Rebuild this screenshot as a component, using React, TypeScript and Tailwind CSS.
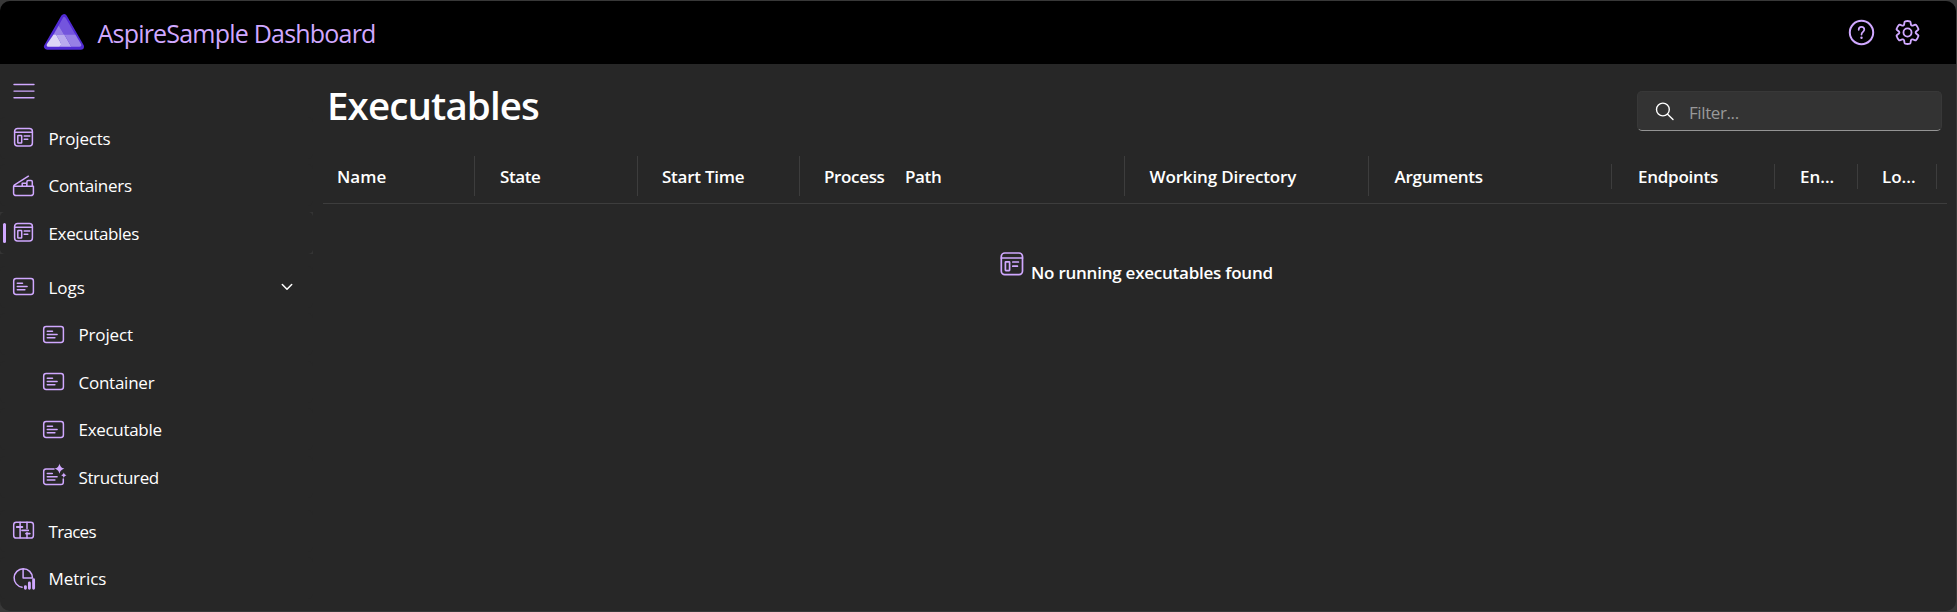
import type { ReactNode } from "react";

const ACCENT = "#d0a8ff";

function Icon({ w = 25, h = 25, sw = 1.5, className = "", children }: { w?: number; h?: number; sw?: number; className?: string; children: ReactNode }) {
  return (
    <svg
      width={w}
      height={h}
      viewBox={`0 0 ${w} ${h}`}
      fill="none"
      stroke={ACCENT}
      strokeWidth={sw}
      strokeLinecap="round"
      strokeLinejoin="round"
      className={`shrink-0 overflow-visible ${className}`}
    >
      {children}
    </svg>
  );
}

const AppIcon = () => (
  <Icon>
    <rect x="3.6" y="3.5" width="17.8" height="17.6" rx="3" />
    <path d="M3.6 7.2h17.8M13.2 10.9h5.6M13.2 14.2h3.6" />
    <rect x="6.8" y="10.6" width="3.9" height="7.3" rx=".5" />
  </Icon>
);

const BoxIcon = () => (
  <Icon>
    <path d="M2.6 13.2h19.8v7a2.4 2.4 0 0 1-2.4 2.4H5a2.4 2.4 0 0 1-2.4-2.4zM2.6 13.2l1-1.4L17.4 3.2M11.2 12.8v-2.6h4.6v2.6M15.9 12.8V8.8a1.2 1.2 0 0 1 1.2-1.2h3a1.2 1.2 0 0 1 1.2 1.2v4" />
  </Icon>
);

const SlideIcon = () => (
  <Icon>
    <rect x="2.7" y="4.6" width="19.7" height="15.9" rx="2.4" />
    <path d="M6.3 9.2h5.2M6.3 12.5h9.8M6.3 15.8h7.6" />
  </Icon>
);

const SparkleSlideIcon = () => (
  <Icon>
    <path d="M13 4.9H5a2.3 2.3 0 0 0-2.3 2.3v11a2.3 2.3 0 0 0 2.3 2.3h15a2.3 2.3 0 0 0 2.3-2.3V15M6.3 9.5h5M6.3 12.8h9.8M6.3 16.1h7.6" />
    <g fill={ACCENT} stroke="none">
      <path d="M18.5-.4c.9 3.3 1.8 4.2 4.9 5.2-3.1 1-4 1.9-4.9 5-.9-3.1-1.8-4-4.9-5 3.1-1 4-1.9 4.9-5.2z" />
      <path d="M22.8 8.5c.5 1.7 1 2.2 2.7 2.7-1.7.5-2.2 1-2.7 2.7-.5-1.7-1-2.2-2.7-2.7 1.7-.5 2.2-1 2.7-2.7z" />
    </g>
  </Icon>
);

const TraceIcon = () => (
  <Icon>
    <rect x="2.7" y="4.2" width="19.7" height="15.9" rx="2.6" />
    <path d="M9.1 4.2v4.6M9.1 10.6v9.2M16 4.2v6.2M16 14.8v5.1" />
    <path d="M5.8 9h5.6M11 12.3h6.2M15 15.6h3.8" strokeWidth="1.8" />
  </Icon>
);

const MetricIcon = () => (
  <Icon>
    <path d="M12.1 2.7a9.3 9.3 0 0 0-1 18.5M12.1 2.7a9.3 9.3 0 0 1 9.4 9.3h-9.4z" />
    <path d="M14.4 20.6v1.6M18.4 17v5.2M22.6 13.8v8.4" strokeWidth="2.9" />
  </Icon>
);

function Logo() {
  return (
    <svg width="42" height="38" viewBox="43 12 42 38" className="mb-px shrink-0">
      <path d="M64 16.4 47.2 45.5h33.6z" fill="#512bd4" stroke="#512bd4" strokeWidth="6.4" strokeLinejoin="round" />
      <path d="M64 16c.8 0 1.3.5 1.8 1.3l9.6 16.3H64l-5.3-9 4-7.3c.4-.8.7-1.3 1.3-1.3z" fill="#7455dd" />
      <path d="M58.7 24.6 64 33.6H53.5z" fill="#9780e5" />
      <path d="M53.5 33.6H56l4.7 8.2c.9 2-.1 4-1.9 4h-10c-1.9 0-2.6-1.4-1.8-2.9z" fill="#dcd5f6" />
      <path d="M56 33.6h8.3l7 12.2H58.8c1.8 0 2.8-2 1.9-4z" fill="#b9aaee" />
      <path d="M64.3 33.6h11.1L81 43c.8 1.5.1 2.8-1.6 2.8h-8.1z" fill="#9780e5" />
    </svg>
  );
}

function NavItem({ icon, label, track, sub, selected, expandable, className = "" }: { icon: ReactNode; label: string; track: string; sub?: boolean; selected?: boolean; expandable?: boolean; className?: string }) {
  return (
    <li className={`h-[42px] w-[313px] ${selected ? "bg-[#343434]" : ""} ${className}`}>
      <div className={`flex h-full items-center rounded-[5px] bg-[#272727] ${sub ? "pl-[41px]" : selected ? "pl-[3px]" : "pl-[11px]"}`}>
        {selected && <span className="mr-[5px] h-5 w-[3px] rounded-full bg-[#d0a8ff]" />}
        {icon}
        <span className={`ml-[12.5px] mt-[2px] text-[17px] leading-6 text-white ${track}`}>{label}</span>
        {expandable && (
          <svg width="12" height="8" viewBox="0 0 12 8" fill="none" stroke="#fff" strokeWidth="1.5" strokeLinecap="round" strokeLinejoin="round" className="ml-auto mr-[20.5px] mt-px">
            <path d="M1.3 1.5 6 6.3l4.7-4.8" />
          </svg>
        )}
      </div>
    </li>
  );
}

const columns = [
  { label: "Name", cell: "w-[152px] pl-[14px]", track: "", bar: "h-10" },
  { label: "State", cell: "w-[163px] pl-[25px]", track: "tracking-[-0.4px]", bar: "h-10" },
  { label: "Start Time", cell: "w-[162px] pl-[24px]", track: "tracking-[-0.25px]", bar: "h-10" },
  { label: "Process", cell: "w-[104px] pl-[24px]", track: "tracking-[-0.35px]", bar: "" },
  { label: "Path", cell: "w-[221px] pl-px", track: "tracking-[-0.35px]", bar: "h-10" },
  { label: "Working Directory", cell: "w-[244px] pl-[24.5px]", track: "tracking-[-0.15px]", bar: "h-10" },
  { label: "Arguments", cell: "w-[243px] pl-[25.5px]", track: "tracking-[-0.25px]", bar: "h-[25px]" },
  { label: "Endpoints", cell: "w-[163px] pl-[26px]", track: "tracking-[-0.25px]", bar: "h-[25px]" },
  { label: "En...", cell: "w-[83px] pl-[25px]", track: "", bar: "h-[25px]" },
  { label: "Lo...", cell: "w-[79px] pl-[24px]", track: "", bar: "h-[25px]" },
];

export default function App() {
  return (
    <div className="h-[612px] w-[1957px] bg-[#383838] pb-px pr-px pt-px font-['Open_Sans','Noto_Sans',sans-serif]">
      <div className="flex h-full flex-col overflow-hidden rounded-[10px] bg-[#272727]">
        <header className="flex h-[63px] shrink-0 items-center bg-black pl-[43px] pr-[35px]">
          <Logo />
          <h2 className="ml-[12.5px] text-[25px] leading-8 tracking-[-0.79px] text-[#d0a8ff]">AspireSample Dashboard</h2>
          <div className="ml-auto flex items-center gap-[19px]">
            <Icon w={27} h={27} sw={2}>
              <circle cx="13.5" cy="13.5" r="11.7" />
              <path d="M10.7 10.8c0-1.8 1.2-2.9 2.8-2.9s2.8 1.1 2.8 2.7c0 2.3-2.8 2.4-2.8 5" strokeWidth="1.7" />
              <circle cx="13.5" cy="18.8" r="1.2" fill={ACCENT} stroke="none" />
            </Icon>
            <svg width="27" height="27" viewBox="0 0 20 20" fill="none" stroke={ACCENT} strokeWidth="1.35" strokeLinejoin="round">
              <path d="M1.91 7.38A8.5 8.5 0 0 1 3.7 4.3a.5.5 0 0 1 .54-.13l1.92.68a1 1 0 0 0 1.32-.76l.36-2a.5.5 0 0 1 .4-.4 8.53 8.53 0 0 1 3.55 0c.2.04.35.2.38.4l.37 2a1 1 0 0 0 1.32.76l1.92-.68a.5.5 0 0 1 .54.13 8.5 8.5 0 0 1 1.78 3.08c.06.2 0 .4-.15.54l-1.56 1.32a1 1 0 0 0 0 1.52l1.56 1.32a.5.5 0 0 1 .15.54 8.5 8.5 0 0 1-1.78 3.08.5.5 0 0 1-.54.13l-1.92-.68a1 1 0 0 0-1.32.76l-.37 2a.5.5 0 0 1-.38.4 8.53 8.53 0 0 1-3.56 0 .5.5 0 0 1-.39-.4l-.36-2a1 1 0 0 0-1.32-.76l-1.92.68a.5.5 0 0 1-.54-.13 8.5 8.5 0 0 1-1.78-3.08.5.5 0 0 1 .15-.54l1.56-1.32a1 1 0 0 0 0-1.52L2.06 7.92a.5.5 0 0 1-.15-.54z" />
              <circle cx="10" cy="10" r="3" />
            </svg>
          </div>
        </header>

        <div className="flex min-h-0 flex-1">
          <nav className="w-[323px] shrink-0">
            <Icon w={22} h={16} sw={1.4} className="ml-[12.5px] mt-[18.7px]">
              <path d="M1 1.5h20M1 8.1h20M1 14.7h20" />
            </Icon>
            <ul className="mt-[18.3px] flex flex-col gap-[5.5px]">
              <NavItem icon={<AppIcon />} label="Projects" track="tracking-[-0.2px]" />
              <NavItem icon={<BoxIcon />} label="Containers" track="tracking-[-0.3px]" />
              <NavItem icon={<AppIcon />} label="Executables" track="tracking-[-0.35px]" selected />
              <NavItem icon={<SlideIcon />} label="Logs" track="" expandable className="mt-[6.5px]" />
              <NavItem icon={<SlideIcon />} label="Project" track="tracking-[-0.15px]" sub />
              <NavItem icon={<SlideIcon />} label="Container" track="tracking-[-0.25px]" sub />
              <NavItem icon={<SlideIcon />} label="Executable" track="tracking-[-0.3px]" sub />
              <NavItem icon={<SparkleSlideIcon />} label="Structured" track="tracking-[-0.4px]" sub />
              <NavItem icon={<TraceIcon />} label="Traces" track="tracking-[-0.7px]" className="mt-[6.5px]" />
              <NavItem icon={<MetricIcon />} label="Metrics" track="tracking-[-0.1px]" />
            </ul>
          </nav>

          <main className="w-[1624px] shrink-0">
            <div className="flex h-[92px] items-start justify-between pr-[5px]">
              <h1 className="ml-[4px] mt-[17px] text-[38.5px] font-semibold leading-[48px] tracking-[-0.88px] text-white">Executables</h1>
              <div className="mt-[27px] flex h-10 w-[305px] items-center overflow-hidden rounded-[5px] border border-b-[#949494] border-l-[#383838] border-r-[#383838] border-t-[#383838] bg-[#333333] pl-[17px]">
                <svg width="20" height="20" viewBox="0 0 20 20" fill="none" stroke="#fff" strokeWidth="1.4" strokeLinecap="round">
                  <circle cx="7.9" cy="8.5" r="6.4" />
                  <path d="m12.6 13.2 5.4 5.3" />
                </svg>
                <span className="ml-[14px] mt-[3px] text-[17px] leading-6 tracking-[-0.4px] text-[#999999]">Filter...</span>
              </div>
            </div>
            <div className="flex h-12 items-start border-b border-[#3d3d3d]">
              {columns.map((c) => (
                <div key={c.label} className={`flex h-10 shrink-0 items-center justify-between ${c.cell}`}>
                  <span className={`mt-px whitespace-nowrap text-[17px] font-semibold leading-6 text-white ${c.track}`}>{c.label}</span>
                  {c.bar && <span className={`w-px bg-[#3d3d3d] ${c.bar}`} />}
                </div>
              ))}
            </div>
            <div className="ml-[676px] mt-[46px] flex items-start">
              <Icon w={26} h={28} sw={1.7}>
                <rect x="2.3" y="3" width="21.2" height="21.6" rx="3.5" />
                <path d="M2.3 8h21.2M13.8 12h5.6M13.8 16.2h4.6" />
                <rect x="6.4" y="11.8" width="4.2" height="8.8" rx=".5" />
              </Icon>
              <span className="ml-[6px] mt-[11px] text-[17px] font-semibold leading-6 tracking-[-0.24px] text-white">No running executables found</span>
            </div>
          </main>
        </div>
      </div>
    </div>
  );
}
